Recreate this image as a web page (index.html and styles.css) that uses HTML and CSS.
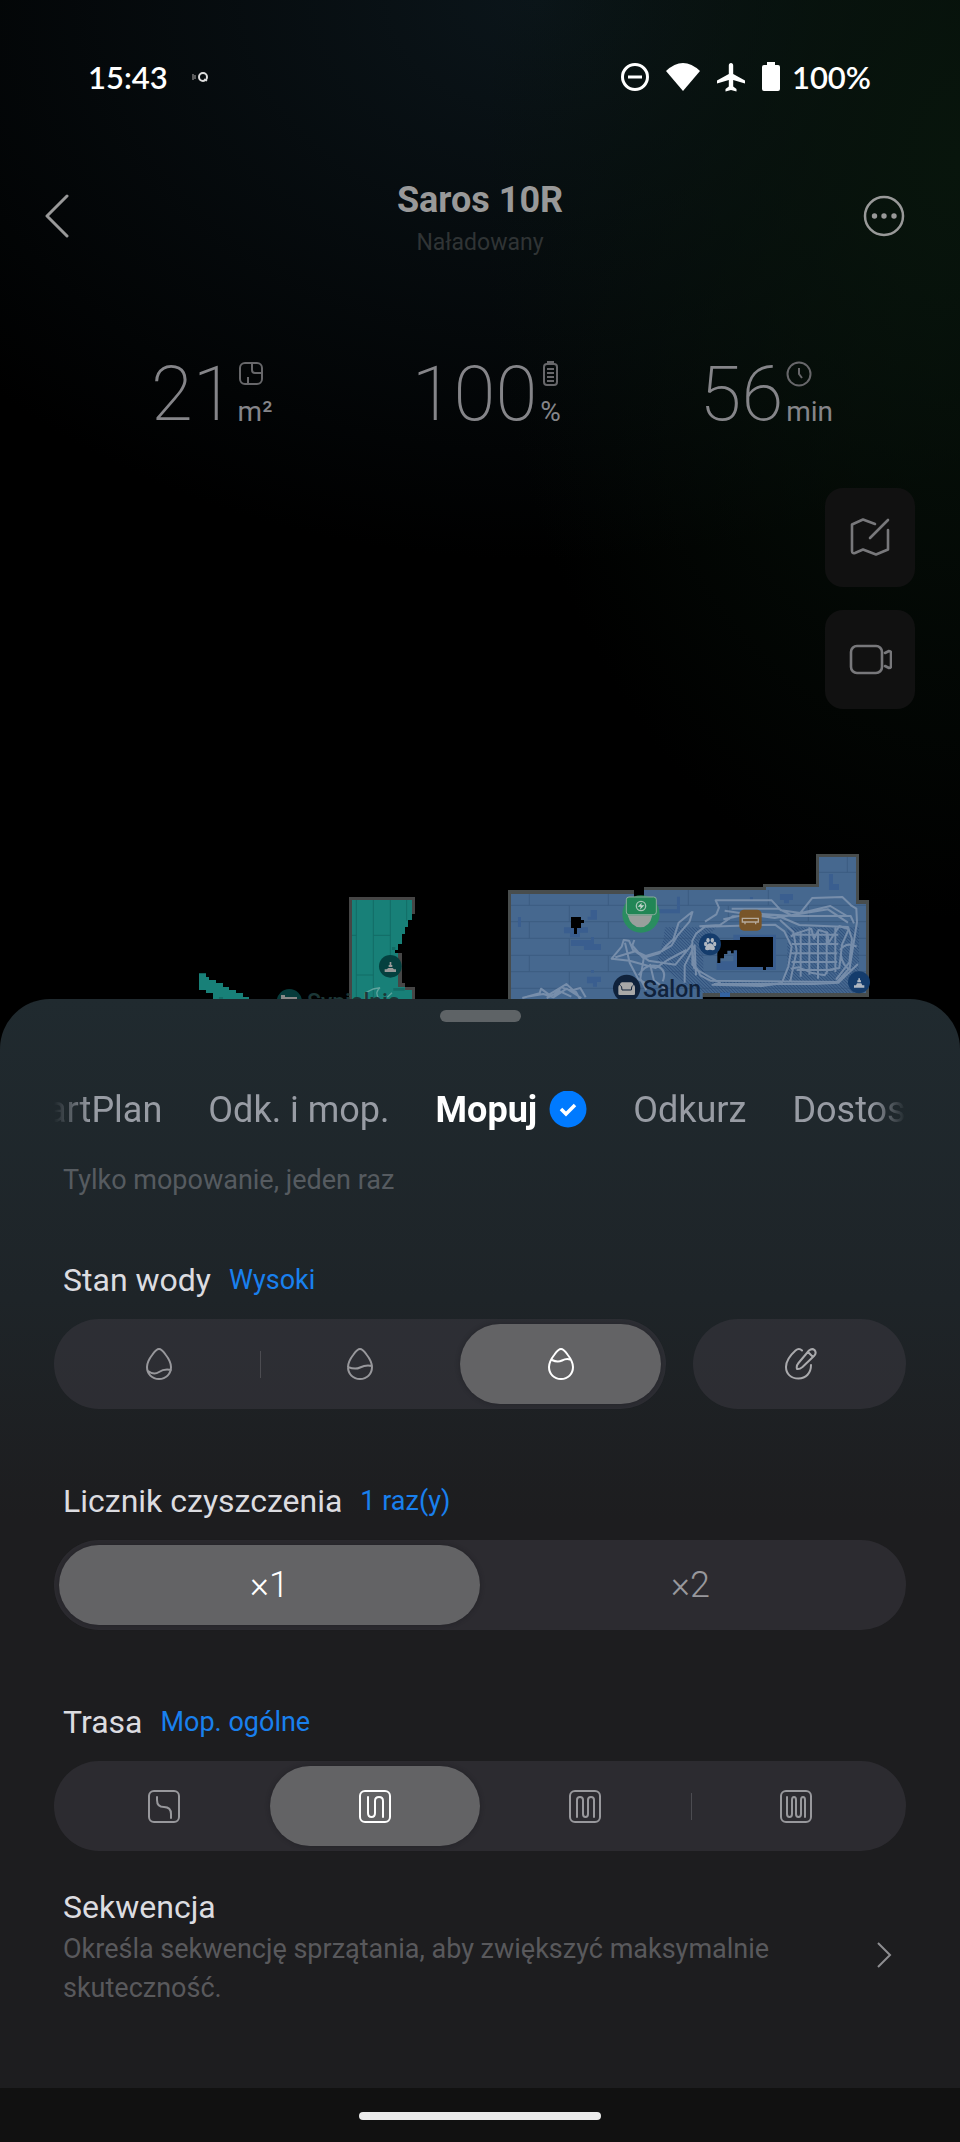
FILE: index.html
```html
<!DOCTYPE html>
<html lang="pl">
<head>
  <meta charset="UTF-8" />
  <meta name="viewport" content="width=device-width, initial-scale=1.0"/>
  <title>Saros 10R</title>
  <link rel="stylesheet" href="styles.css">
</head>
<body>

  <!-- Status bar -->
  <div class="status-bar">
    <span class="clock">15:43</span>
    <svg class="status-dot" width="18" height="14" viewBox="0 0 18 14">
      <path d="M1 4v6M3 5v4" stroke="#777" stroke-width="1.5"/>
      <circle cx="11" cy="7" r="4" fill="none" stroke="#ddd" stroke-width="2"/>
      <path d="M12 9l3 2" stroke="#ddd" stroke-width="1.5"/>
    </svg>
    <div class="status-icons">
      <svg width="30" height="30" viewBox="0 0 30 30" fill="none" stroke="#fff" stroke-width="3">
        <circle cx="15" cy="15" r="12.5"/><path d="M8 15h14"/>
      </svg>
      <svg width="34" height="30" viewBox="0 0 34 30" fill="#fff">
        <path d="M0 9Q17-7 34 9L17 29Z"/>
      </svg>
      <svg width="30" height="30" viewBox="0 0 30 30" fill="#fff">
        <path d="M15 1c1.400 0 2.200 1.100 2.200 2.500v8.500L29 18.500v3L17.200 18v6.500l3.300 2.500v2.500L15 28l-5.500 1.500V27l3.300-2.500V18L1 21.500v-3L12.800 12V3.500C12.800 2.100 13.600 1 15 1z"/>
      </svg>
      <svg width="18" height="30" viewBox="0 0 18 30" fill="#fff">
        <path d="M5 0h8v3h3a2 2 0 0 1 2 2v22a2 2 0 0 1-2 2H2a2 2 0 0 1-2-2V5a2 2 0 0 1 2-2h3z"/>
      </svg>
      <span>100%</span>
    </div>
  </div>

  <!-- Header -->
  <header class="header">
    <button class="icon-btn" aria-label="Wstecz">
      <svg width="24" height="44" viewBox="0 0 24 44" fill="none" stroke="#999" stroke-width="3" stroke-linecap="round" stroke-linejoin="round"><path d="M22 2L2 22l20 20"/></svg>
    </button>
    <div class="title">
      <h1>Saros 10R</h1>
      <p>Naładowany</p>
    </div>
    <button class="icon-btn" aria-label="Więcej">
      <svg width="42" height="42" viewBox="0 0 42 42">
        <circle cx="21" cy="21" r="19" fill="none" stroke="#999" stroke-width="2.500"/>
        <g fill="#999"><circle cx="11.500" cy="21" r="2.700"/><circle cx="21" cy="21" r="2.700"/><circle cx="31" cy="21" r="2.700"/></g>
      </svg>
    </button>
  </header>

  <!-- Cleaning stats -->
  <section class="stats">
    <div class="stat">
      <span class="value">21</span>
      <span class="unit">
        <svg width="26" height="28" viewBox="0 0 26 28" fill="none" stroke="#67676a" stroke-width="2"><rect x="2" y="3" width="22" height="21" rx="5"/><path d="M14 3v7q0 3 3 3h7M10 24v-7"/></svg>
        m²
      </span>
    </div>
    <div class="stat">
      <span class="value">100</span>
      <span class="unit">
        <svg width="26" height="28" viewBox="0 0 26 28" fill="none" stroke="#67676a" stroke-width="2"><rect x="4" y="4" width="13" height="21" rx="3"/><path d="M7 2h7M7 9h7M7 13h7M7 17h7M7 21h7"/></svg>
        %
      </span>
    </div>
    <div class="stat">
      <span class="value">56</span>
      <span class="unit">
        <svg width="26" height="28" viewBox="0 0 26 28" fill="none" stroke="#67676a" stroke-width="2"><circle cx="13" cy="14" r="11.500"/><path d="M13 8v6l3 4"/></svg>
        min
      </span>
    </div>
  </section>

  <!-- Map -->
  <main class="map-area">
    <div class="map-tools">
      <button class="tool" aria-label="Edytuj mapę">
        <svg width="44" height="44" viewBox="0 0 44 44" fill="none" stroke="#78787b" stroke-width="2.600" stroke-linecap="round" stroke-linejoin="round"><path d="M27 8L15 3.500 4 8.500V35q0 3 3 2l8-3.500 13 5 12-5V14M40 4L22 22"/></svg>
      </button>
      <button class="tool" aria-label="Kamera">
        <svg width="44" height="44" viewBox="0 0 44 44" fill="none" stroke="#78787b" stroke-width="2.600" stroke-linecap="round" stroke-linejoin="round"><rect x="3" y="8" width="31" height="27" rx="6"/><path d="M37 15l4-2q2 0 2 2v13q0 2-2 2l-4-2"/></svg>
      </button>
    </div>

    <svg class="map" viewBox="0 853 960 146">
      <defs>
        <pattern id="hatch" width="7" height="7" patternUnits="userSpaceOnUse" patternTransform="rotate(45)">
          <path d="M0 0h7" stroke="#2c4c79" stroke-width="4"/>
        </pattern>
      </defs>

      <!-- Bedroom -->
      <g transform="translate(180 860) scale(.33333)">
        <path fill="#464646" d="M507 111h198v51h-9V120H516v300h-9zM654 279h12v90h9v12h30v40h-9v-31h-42z"/>
        <path fill="#188078" d="M516 120h180v60h-12v21h-9v21h-9v30h-12v18h-9v9h9v102h21v9h21v30H516zM57 340h21v11h9v9h21v9h21v12h18v9h21v9h21v12h18v9H99v-21H78v-9H57z"/>
        <path fill="none" stroke="#136c66" stroke-width="3" d="M529 120v297M580 120v297M631 120v180M680 120v62M516 226h13M580 226h51M529 345h51"/>
        <path fill="#136c66" d="M636 261h10v9h-10zM117 411h12v9h-12zM640 384h34v8h-34z"/>
        <path fill="none" stroke="#5fa39d" stroke-width="4" d="M556 417v-18l24-12 20-4q-18 14-2 34M622 412l14-14"/>
        <circle cx="631" cy="319" r="34" fill="#04403f"/>
        <path fill="#999" d="M629 306h5v9h3v6h-11v-6h3zM625 324h13l4 4h6v8h-34v-8h6z"/>
        <circle cx="328" cy="425" r="38" fill="#063b3b"/>
        <path fill="#888" d="M303 405h12v6h36v12h-48z"/>
      </g>
      <text class="room-name dim" x="307" y="1010">Sypialnia</text>

      <!-- Living room -->
      <g transform="translate(490 840) scale(.33333)">
        <path fill="#484d4d" d="M54 150H432v21h30v-30h357v-9h159V42h129v138h30v291H638v10H54z"/>
        <path fill="#46688f" d="M63 162H432v9h30v-21h366v-9h159V51h111v141h30v267H638v20H63z"/>
        <path fill="#3463a0" d="M690 457h30v14h-30z"/>
        <path fill="none" stroke="#3c5c82" stroke-width="3" d="M63 196H1128M63 245H1128M63 295H1128M63 346H1128M63 395H1128M63 445H1128M987 97h111M118 162v34M118 245v50M118 346v49M355 162v34M355 245v50M355 346v49M238 196v49M238 295v51M238 395v50M475 196v49M595 150v46M715 196v49M835 150v46M955 196v49M1072 51v46"/>
        <path fill="#3a5e8f" d="M302 210h19v29h-28v-9h9zM84 231h9v30h-9zM222 262h72v16h-24v14h-30v-12h-18zM243 300h60v-9h9v21h21v18h-51v-12h-39zM291 410h42v16h-12v14h-12v-10h-18zM303 390h9v8h-9zM1017 102h12v30h18v18h-30zM870 162h39v18h-12v10h-15v-10h-12zM561 170h9v50h-66v-12h57zM780 171h9v9h-9zM730 284h128v106H680v-26h50z"/>
        <path fill="url(#hatch)" d="M525 262h155l-40 40v90l22 34h200l30-24V262h215v197H640l-60-30-80-60 20-70z"/>
        <path fill="#000" d="M243 231h30v9h9v9h-9v15h-12v18h-9v-18h-9zM690 300h60v-9h99v90h-21v9h-9v-9h-78v-50h-10v9h-8v-8h-11v10h-10v13h-11v14h-9v-30z"/>
        <g fill="none" stroke="#8095b0" stroke-width="6" stroke-linejoin="round" opacity=".85">
          <path d="M97 474l52-14 4-14 24 18 36-22 16-10 20 18 22-6 16 28M110 470l50-8 30 10 40-26 44 28M190 466l24-24 44 14 12 22M170 474l40-20 34 16"/>
          <path d="M608 214l-9 30-36 42-18 30-30 18-48 14-38-18-12-28-16-2-6 20-30 36 54 6 78 22 36-24 56-30M606 216l-40 32-16 50-24 22-18 20-42 12M405 308l14 60 26 50 20 10M433 300l-6 16 34 40-10 60 18 34M376 352l60-18 40 28 80 12 50-60 6 70 80 46M446 406q20-36 56-28 30 14 16 46M480 372l12 50 40 28M584 428v-52l30-60 4 90"/>
          <path d="M645 245l34-22 8-20-10-22h168l28 30 58 8 36-45 90-3 26 25 16 10 2 40-14 88-8 50-38 42-380-4-30-16-10-20-14-12V302l12-22 26-20 210-6 28 20 22 46-10 60-20 50-60 8-150-4M628 259l62-4 38-26 130-4 70 30 146 6 12 36-8 70-40 52M704 212l150 22 160-26 60 40M725 206h140l40 20 116-28 50 30M672 432h300l74-4 22-22 36-34M700 238l90-18 120 8h172l10 22M870 240l40 36 10 56-20 96"/>
          <path d="M905 284h140M905 312h140M902 340h140M905 366h136M920 390h110M932 272v138M958 262v142M984 274v142M1010 274v128M1036 262v134M902 290l16-10 46-14 8 30 14-26 26 8 4 30 32-50 28 10-20 46-8 70-34 6-10 16-40-8-38-16-24 4M1050 330q20-26 50-10M1052 340q4 40 34 52"/>
        </g>

        <!-- Dock -->
        <circle cx="453" cy="222" r="56" fill="#269458" opacity=".85"/>
        <path fill="#999f9c" d="M413 226h74q-8 36-36 36t-38-36z"/>
        <rect x="409" y="171" width="90" height="53" rx="8" fill="#218655" stroke="#8bac9d" stroke-width="3"/>
        <circle cx="453" cy="198" r="14" fill="none" stroke="#a4c4b4" stroke-width="4"/>
        <path fill="#c3d5cc" d="M455 188l-12 12h9l-2 9 13-13h-9z"/>

        <rect x="748" y="209" width="67" height="63" rx="14" fill="#785529"/>
        <path fill="none" stroke="#b5ab9d" stroke-width="4" d="M757 235h48v11h-48zM765 246v7M797 246v7"/>

        <circle cx="660" cy="313" r="33" fill="#143c6c"/>
        <g fill="#b0b8c2"><ellipse cx="647" cy="312" rx="5" ry="7"/><ellipse cx="654" cy="301" rx="5" ry="7"/><ellipse cx="667" cy="301" rx="5" ry="7"/><ellipse cx="674" cy="312" rx="5" ry="7"/><path d="M660 310q8 0 14 12 3 9-6 9l-8-2-8 2q-9 0-6-9 6-12 14-12z"/></g>

        <circle cx="1107" cy="427" r="33" fill="#143c6c"/>
        <path fill="#b0b8c2" d="M1105 415h5v6h3v6h-11v-6h3zM1101 430h13l3 6h6v7h-31v-7h6z"/>

        <circle cx="410" cy="445" r="41" fill="#10223b"/>
        <path fill="#a8a8a8" d="M396 427h28q6 0 6 8 5 0 5 7v20q0 3-4 3h-42q-4 0-4-3v-20q0-7 5-7 0-8 6-8z"/>
        <path fill="none" stroke="#10223b" stroke-width="3" d="M391 436q5 2 5 14h28q0-12 5-14"/>
      </g>
      <text class="room-name" x="643" y="997">Salon</text>
    </svg>
  </main>

  <!-- Bottom sheet -->
  <section class="sheet">
    <div class="handle"></div>

    <div class="tabs-view">
      <div class="tabs" role="tablist">
        <button class="tab" role="tab">SmartPlan</button>
        <button class="tab" role="tab">Odk. i mop.</button>
        <button class="tab active" role="tab" aria-selected="true">
          Mopuj
          <svg width="38" height="38" viewBox="0 0 38 38"><circle cx="19" cy="18" r="18.500" fill="#007aff"/><path d="M12 18l5 5 9-9" fill="none" stroke="#fff" stroke-width="3.500"/></svg>
        </button>
        <button class="tab" role="tab">Odkurz</button>
        <button class="tab" role="tab">Dostosuj</button>
      </div>
    </div>
    <p class="mode-note">Tylko mopowanie, jeden raz</p>

    <fieldset class="setting">
      <legend>Stan wody <span>Wysoki</span></legend>
      <div class="row">
        <div class="segments">
          <label class="segment">
            <input type="radio" name="water" aria-label="Niski">
            <span><svg width="32" height="36" viewBox="0 0 32 36"><path d="M16 3c2 0 4 2 6.500 5.500C26 13 28 17 28 21c0 7-5 12-12 12S4 28 4 21c0-4 2-8 5.500-12.500C12 5 14 3 16 3zM5 25c4 3 8 3 11 1s7-3 12-2"/></svg></span>
          </label>
          <label class="segment split">
            <input type="radio" name="water" aria-label="Średni">
            <span><svg width="32" height="36" viewBox="0 0 32 36"><path d="M16 3c2 0 4 2 6.500 5.500C26 13 28 17 28 21c0 7-5 12-12 12S4 28 4 21c0-4 2-8 5.500-12.500C12 5 14 3 16 3zM4 21c5 2 9 2 12 .5s7-3 12-1.500"/></svg></span>
          </label>
          <label class="segment">
            <input type="radio" name="water" aria-label="Wysoki" checked>
            <span><svg width="32" height="36" viewBox="0 0 32 36"><path d="M16 3c2 0 4 2 6.500 5.500C26 13 28 17 28 21c0 7-5 12-12 12S4 28 4 21c0-4 2-8 5.500-12.500C12 5 14 3 16 3zM7 14c4 2 7 2 10 .5s5-2 8-1"/></svg></span>
          </label>
        </div>
        <button class="custom" aria-label="Własny poziom wody">
          <svg width="36" height="36" viewBox="0 0 36 36"><path d="M20 4.500Q17 1.500 13.500 4.500 4 13 4 21c0 7 5 11.500 12.500 11.500S29 27 29 19M32.500 4q2.500 3-.5 6L20.500 21q-3 2.500-5.500 2-1-3 1.500-6L27 4.500q3-2.500 5.500-.5zM26 6l5 5"/></svg>
        </button>
      </div>
    </fieldset>

    <fieldset class="setting">
      <legend>Licznik czyszczenia <span>1 raz(y)</span></legend>
      <div class="segments">
        <label class="segment"><input type="radio" name="count" checked><span>×1</span></label>
        <label class="segment"><input type="radio" name="count"><span>×2</span></label>
      </div>
    </fieldset>

    <fieldset class="setting">
      <legend>Trasa <span>Mop. ogólne</span></legend>
      <div class="segments">
        <label class="segment">
          <input type="radio" name="route" aria-label="Szybka">
          <span><svg width="36" height="36" viewBox="0 0 36 36"><rect x="3" y="3" width="30" height="31" rx="5"/><path d="M11 9v3q0 7 7 7t7 7v4"/></svg></span>
        </label>
        <label class="segment">
          <input type="radio" name="route" aria-label="Mop. ogólne" checked>
          <span><svg width="36" height="36" viewBox="0 0 36 36"><rect x="3" y="3" width="30" height="31" rx="5"/><path d="M11 9v16q0 4 3.500 4t3.500-4V13q0-4 4-4t4 4v16"/></svg></span>
        </label>
        <label class="segment">
          <input type="radio" name="route" aria-label="Gęsta">
          <span><svg width="36" height="36" viewBox="0 0 36 36"><rect x="3" y="3" width="30" height="31" rx="5"/><path d="M10 29V12q0-3 3-3t3 3v14q0 3 2.500 3t2.500-3V12q0-3 3-3t3 3v17"/></svg></span>
        </label>
        <label class="segment split">
          <input type="radio" name="route" aria-label="Bardzo gęsta">
          <span><svg width="36" height="36" viewBox="0 0 36 36"><rect x="3" y="3" width="30" height="31" rx="5"/><path d="M9 9v17q0 3 2.500 3t2.500-3V12q0-3 2-3t2 3v14q0 3 2.500 3t2.500-3V12q0-3 2-3t2 3v17"/></svg></span>
        </label>
      </div>
    </fieldset>

    <a class="sequence" href="#">
      <div>
        <h2>Sekwencja</h2>
        <p>Określa sekwencję sprzątania, aby zwiększyć maksymalnie skuteczność.</p>
      </div>
      <svg class="arrow" width="16" height="44" viewBox="0 0 16 28" fill="none" stroke="#8e8e91" stroke-width="2"><path d="M1 2l12 12L1 26"/></svg>
    </a>
  </section>

  <div class="nav-bar"><div class="nav-pill"></div></div>

</body>
</html>
```
FILE: styles.css
```css
* { margin: 0; padding: 0; box-sizing: border-box; }

body {
  font-family: Roboto, sans-serif;
  color: #dcdce0;
  background:
    radial-gradient(ellipse 480px 760px at 100% 160px, #08150c, transparent),
    radial-gradient(ellipse 760px 560px at 56% 0, #0b151a, transparent),
    #000;
}

svg { display: block; flex: none; }

button {
  font: inherit;
  color: inherit;
  background: none;
  border: none;
  cursor: pointer;
}

/* Status bar */
.status-bar {
  display: flex;
  align-items: center;
  height: 154px;
  padding: 0 89px 0 88px;
  font-family: Lato, sans-serif;
  font-size: 31px;
  font-weight: 600;
  color: #fff;
}

.status-dot { margin-left: 24px; }

.status-icons {
  display: flex;
  align-items: center;
  gap: 16px;
  margin-left: auto;
}

.status-icons span { margin-left: -4px; }

/* Header */
.header {
  display: flex;
  align-items: center;
  justify-content: space-between;
  height: 124px;
  padding: 0 45px;
}

.icon-btn { width: 52px; }

.title {
  text-align: center;
  padding-top: 7px;
}

.title h1 {
  font-size: 36px;
  line-height: 46px;
  font-weight: 700;
  color: #999;
}

.title p {
  font-size: 23px;
  line-height: 40px;
  color: #303435;
}

/* Stats */
.stats {
  display: grid;
  grid-template-columns: repeat(3, 1fr);
  padding: 76px 55px 0 73px;
  color: #858589;
}

.stat {
  display: flex;
  justify-content: center;
  gap: 3px;
}

.value {
  font-size: 76px;
  line-height: 80px;
  font-weight: 200;
}

.unit {
  display: flex;
  flex-direction: column;
  gap: 8px;
  padding-top: 6px;
  font-size: 28px;
  line-height: 32px;
}

/* Map */
.map-tools {
  display: flex;
  flex-direction: column;
  align-items: flex-end;
  gap: 23px;
  padding: 54px 45px 144px;
}

.tool {
  display: flex;
  align-items: center;
  justify-content: center;
  width: 90px;
  height: 99px;
  border-radius: 18px;
  background: #111;
}

.map {
  width: 100%;
  height: auto;
}

.room-name {
  font-size: 23px;
  font-weight: 500;
  fill: #10223b;
}

.room-name.dim { fill: #1b3636; }

/* Bottom sheet */
.sheet {
  padding: 11px 54px 80px;
  border-radius: 50px 50px 0 0;
  background: linear-gradient(#202a2f, #1e2428 300px, #1d1d1f 520px);
}

.handle {
  width: 81px;
  height: 12px;
  margin: 0 auto 60px;
  border-radius: 6px;
  background: #5e6366;
}

.tabs-view {
  overflow: hidden;
  -webkit-mask-image: linear-gradient(90deg, transparent, #000 36px, #000 calc(100% - 36px), transparent);
  mask-image: linear-gradient(90deg, transparent, #000 36px, #000 calc(100% - 36px), transparent);
}

/* scrolled so the selected tab sits in the middle */
.tabs {
  display: flex;
  gap: 46px;
  margin-left: -60px;
}

.tab {
  display: flex;
  align-items: center;
  gap: 12px;
  flex: none;
  font-size: 36px;
  line-height: 56px;
  color: #989ca4;
}

.tab.active {
  font-weight: 700;
  color: #fff;
}

.mode-note {
  padding: 22px 9px 0;
  margin-bottom: 58px;
  font-size: 27px;
  line-height: 40px;
  color: #565b60;
}

/* Settings */
.setting {
  border: none;
  padding-top: 17px;
}

.setting + .setting { margin-top: 70px; }

.setting legend {
  display: flex;
  align-items: center;
  gap: 18px;
  padding: 0 9px;
  font-size: 32px;
  line-height: 44px;
}

.setting legend span {
  font-size: 27px;
  color: #1980ee;
}

.row {
  display: flex;
  gap: 27px;
}

.segments {
  display: flex;
  flex: 1;
  height: 90px;
  padding: 5px;
  border-radius: 45px;
  background: rgba(59, 57, 65, 0.5);
}

.segment {
  position: relative;
  flex: 1;
  cursor: pointer;
}

.segment input {
  position: absolute;
  opacity: 0;
}

.segment span {
  display: flex;
  align-items: center;
  justify-content: center;
  height: 100%;
  border-radius: 40px;
  font-size: 36px;
  font-weight: 300;
  color: #98989c;
}

.segment input:checked + span {
  background: #636365;
  box-shadow: 0 0 5px rgba(20, 20, 24, 0.4);
  color: #fff;
}

.segment.split::before {
  content: "";
  position: absolute;
  left: 0;
  top: 27px;
  width: 1px;
  height: 27px;
  background: #4c4c51;
}

.segment svg,
.custom svg {
  fill: none;
  stroke: currentColor;
  stroke-width: 2;
  stroke-linecap: round;
  stroke-linejoin: round;
}

.custom {
  display: flex;
  align-items: center;
  justify-content: center;
  width: 25%;
  border-radius: 45px;
  background: rgba(59, 57, 65, 0.5);
  color: #aaaaad;
}

.sequence {
  display: flex;
  align-items: center;
  justify-content: space-between;
  margin-top: 34px;
  padding: 0 13px 0 9px;
  color: inherit;
  text-decoration: none;
}

.sequence div { max-width: 760px; }

.sequence .arrow { padding-top: 16px; }

.sequence h2 {
  font-size: 32px;
  line-height: 45px;
  font-weight: 400;
}

.sequence p {
  font-size: 27px;
  line-height: 39px;
  color: #59595c;
}

/* Navigation bar */
.nav-bar {
  padding: 24px 0 23px;
  background: #111;
}

.nav-pill {
  width: 242px;
  height: 8px;
  margin: 0 auto;
  border-radius: 4px;
  background: #ebebeb;
}
```
